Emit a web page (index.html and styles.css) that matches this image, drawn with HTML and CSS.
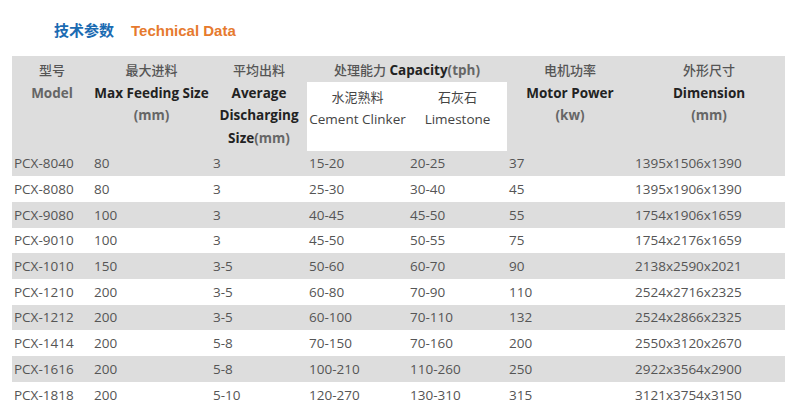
FILE: index.html
```html
<!DOCTYPE html>
<html lang="zh">
<head>
<meta charset="utf-8">
<title>技术参数 Technical Data</title>
<link rel="stylesheet" href="styles.css">
</head>
<body>
<div class="page">
  <h2 class="title"><span class="title-cn">技术参数</span><span class="title-en">Technical Data</span></h2>
  <table class="spec">
    <colgroup>
      <col class="c1"><col class="c2"><col class="c3"><col class="c4"><col class="c5"><col class="c6"><col class="c7">
    </colgroup>
    <thead>
      <tr class="h1">
        <th rowspan="2"><span class="cn">型号</span><br><span class="mute">Model</span></th>
        <th rowspan="2"><span class="cn">最大进料</span><br>Max Feeding Size<br><span class="mute">(mm)</span></th>
        <th rowspan="2"><span class="cn">平均出料</span><br>Average<br>Discharging<br>Size<span class="mute">(mm)</span></th>
        <th colspan="2" class="cap"><span class="cn">处理能力</span> Capacity<span class="mute">(tph)</span></th>
        <th rowspan="2"><span class="cn">电机功率</span><br>Motor Power<br><span class="mute">(kw)</span></th>
        <th rowspan="2"><span class="cn">外形尺寸</span><br>Dimension<br><span class="mute">(mm)</span></th>
      </tr>
      <tr class="h2">
        <th class="sub"><span class="cn">水泥熟料</span><br>Cement Clinker</th>
        <th class="sub"><span class="cn">石灰石</span><br>Limestone</th>
      </tr>
    </thead>
    <tbody>
      <tr><td>PCX-8040</td><td>80</td><td>3</td><td>15-20</td><td>20-25</td><td>37</td><td>1395x1506x1390</td></tr>
      <tr><td>PCX-8080</td><td>80</td><td>3</td><td>25-30</td><td>30-40</td><td>45</td><td>1395x1906x1390</td></tr>
      <tr><td>PCX-9080</td><td>100</td><td>3</td><td>40-45</td><td>45-50</td><td>55</td><td>1754x1906x1659</td></tr>
      <tr><td>PCX-9010</td><td>100</td><td>3</td><td>45-50</td><td>50-55</td><td>75</td><td>1754x2176x1659</td></tr>
      <tr><td>PCX-1010</td><td>150</td><td>3-5</td><td>50-60</td><td>60-70</td><td>90</td><td>2138x2590x2021</td></tr>
      <tr><td>PCX-1210</td><td>200</td><td>3-5</td><td>60-80</td><td>70-90</td><td>110</td><td>2524x2716x2325</td></tr>
      <tr><td>PCX-1212</td><td>200</td><td>3-5</td><td>60-100</td><td>70-110</td><td>132</td><td>2524x2866x2325</td></tr>
      <tr><td>PCX-1414</td><td>200</td><td>5-8</td><td>70-150</td><td>70-160</td><td>200</td><td>2550x3120x2670</td></tr>
      <tr><td>PCX-1616</td><td>200</td><td>5-8</td><td>100-210</td><td>110-260</td><td>250</td><td>2922x3564x2900</td></tr>
      <tr><td>PCX-1818</td><td>200</td><td>5-10</td><td>120-270</td><td>130-310</td><td>315</td><td>3121x3754x3150</td></tr>
    </tbody>
  </table>
</div>
</body>
</html>
```

FILE: styles.css
```css
html, body {
  margin: 0;
  padding: 0;
  background: #ffffff;
}

.page {
  padding: 0 0 0 12px;
  font-family: "Open Sans", "Noto Sans CJK SC", sans-serif;
}

.title {
  margin: 0;
  padding: 20px 0 0 42px;
  height: 36px;
  box-sizing: border-box;
  height: 56px;
  line-height: 20px;
  font-size: 15px;
  font-weight: bold;
}

.title-cn {
  font-family: "Noto Sans CJK SC", sans-serif;
  color: #1b6bb2;
}

.title-en {
  font-family: "Liberation Sans", Arial, sans-serif;
  color: #e67a2e;
  margin-left: 17px;
}

.spec {
  border-collapse: collapse;
  border-spacing: 0;
  table-layout: fixed;
  width: 773px;
  font-size: 13.5px;
  color: #555555;
}

.c1 { width: 80px; }
.c2 { width: 119px; }
.c3 { width: 96px; }
.c4 { width: 101px; }
.c5 { width: 99px; }
.c6 { width: 126px; }
.c7 { width: 152px; }

.spec thead {
  background: #dddddd;
}

.spec th {
  padding: 0;
  font-weight: 700;
  color: #222222;
  text-align: center;
  vertical-align: top;
  line-height: 22.5px;
  white-space: nowrap;
}

.spec thead .h1 th {
  padding-top: 3px;
}

.spec thead .h1 { height: 25px; }
.spec thead .h2 { height: 69px; }

.spec th.cap {
  vertical-align: top;
}

.spec th.sub {
  background: #ffffff;
  font-weight: 400;
  color: #444444;
  padding-top: 4px;
  line-height: 22px;
}

.spec .cn {
  font-family: "Noto Sans CJK SC", sans-serif;
  font-size: 13px;
  font-weight: 500;
  color: #555555;
}

.spec th.sub .cn {
  font-weight: 400;
  color: #444444;
}

.spec .mute {
  color: #666666;
}

.spec tbody tr {
  height: 25.7px;
}

.spec tbody tr:nth-child(odd) {
  background: #dddddd;
}

.spec td {
  padding: 0 0 0 2px;
  vertical-align: middle;
  white-space: nowrap;
  line-height: 18px;
}
```
